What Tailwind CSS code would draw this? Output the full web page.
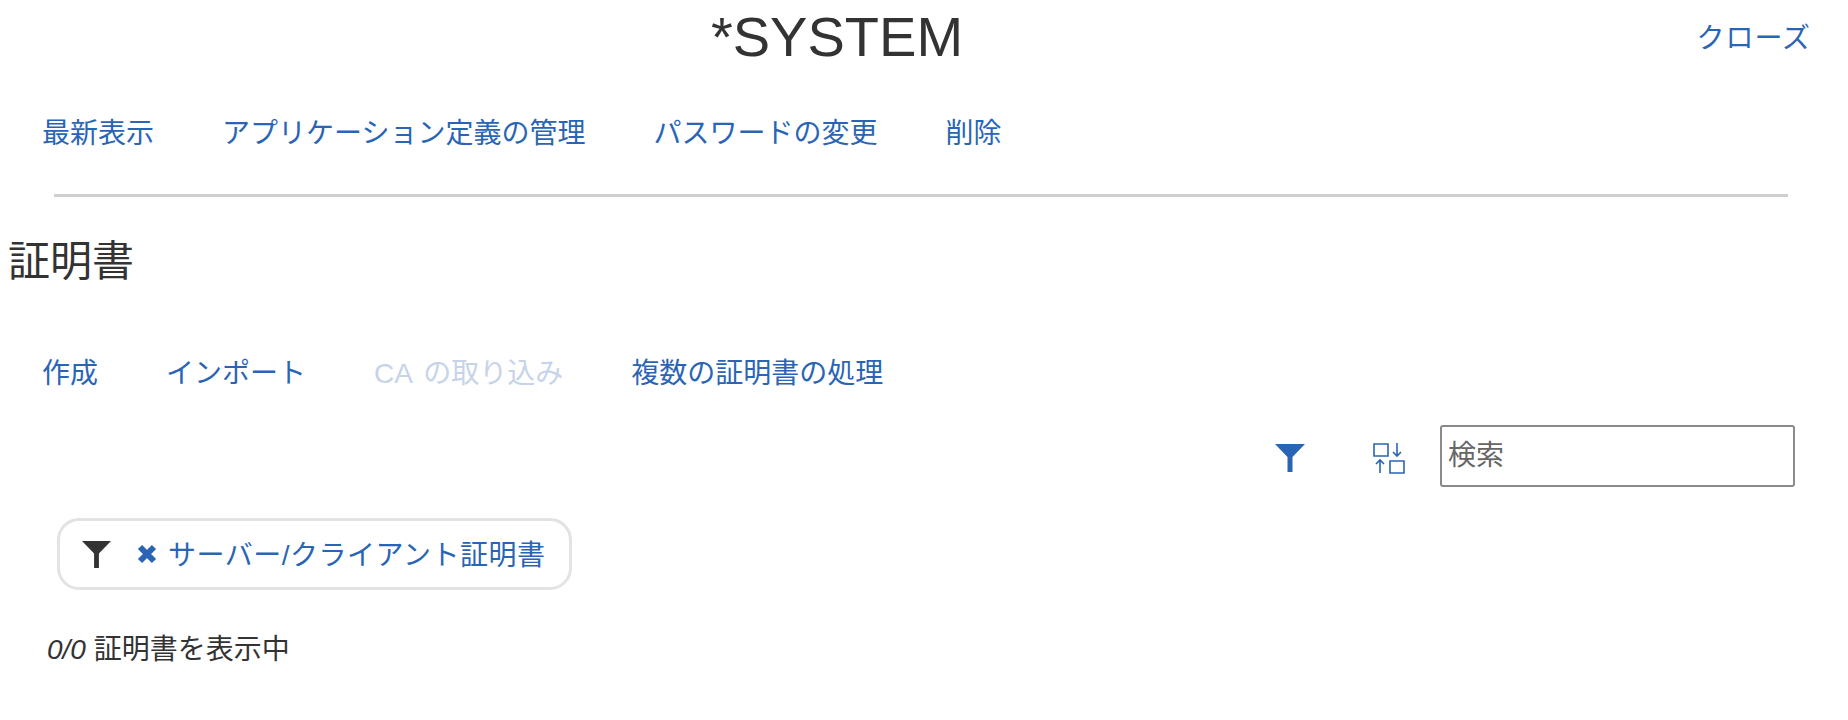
<!DOCTYPE html>
<html lang="ja">
<head>
    <meta charset="UTF-8">
    <title>*SYSTEM</title>
    <script src="https://cdn.jsdelivr.net/npm/@tailwindcss/browser@4"></script>
</head>
<body class="bg-white h-[720px] overflow-hidden text-[#333] font-['Liberation_Sans','Noto_Sans_CJK_JP',sans-serif]">
    <!-- Title -->
    <div class="relative h-[74px] flex justify-center pr-[174px]">
        <h1 class="text-[56px] leading-[74px]">*SYSTEM</h1>
        <a class="absolute right-[37px] top-[19px] text-[28px] leading-[40px] tracking-[1px] text-[#2a65b5]">クローズ</a>
    </div>

    <!-- Object actions -->
    <div class="mt-[40px] pl-[42px] flex gap-[68px] text-[28px] leading-[40px] text-[#2a65b5]">
        <a>最新表示</a>
        <a>アプリケーション定義の管理</a>
        <a>パスワードの変更</a>
        <a>削除</a>
    </div>

    <hr class="mt-[40px] mx-[54px] w-[1734px] border-0 h-[3px] bg-[#cfcfcf]">

    <h2 class="mt-[37px] pl-[8px] text-[42px] leading-[56px]">証明書</h2>

    <!-- List actions -->
    <div class="mt-[64px] pl-[42px] flex gap-[68px] text-[28px] leading-[40px] text-[#2a65b5]">
        <a>作成</a>
        <a>インポート</a>
        <a class="text-[#c6d4ea] [word-spacing:4px]">CA の取り込み</a>
        <a>複数の証明書の処理</a>
    </div>

    <!-- Toolbar -->
    <div class="mt-[31px] pr-[53px] flex justify-end items-center">
        <svg class="w-[30px] h-[30px] mr-[68px] mt-[3px]" viewBox="0 0 30 30" fill="#2a65b5"><path d="M0 1h30L17.500 14v15h-5V14z"/></svg>
        <svg class="w-[32px] h-[32px] mr-[35px] mt-[3px]" viewBox="0 0 32 32" fill="none" stroke="#2a65b5" stroke-width="1.6"><path d="M1 2h14v12H1zM17 19h14v12H17zM24 1v13M20 10l4 4 4-4M7 18v13M3 22l4-4 4 4"/></svg>
        <input type="text" placeholder="検索" class="w-[355px] h-[62px] px-[6px] border-2 border-[#8a8a8a] rounded-[3px] text-[28px] placeholder:text-[#666] outline-none">
    </div>

    <!-- Applied filter -->
    <div class="mt-[31px] ml-[57px] w-[515px] h-[72px] pl-[22px] flex items-center border-[3px] border-[#e3e3e3] rounded-[22px]">
        <svg class="w-[29px] h-[29px] mr-[26px]" viewBox="0 0 30 30" fill="#333"><path d="M0 1h30L17.500 14v15h-5V14z"/></svg>
        <svg class="w-[20px] h-[20px] mr-[11px]" viewBox="0 0 20 20" fill="none" stroke="#2a65b5" stroke-width="6"><path d="M3 3l14 14M17 3L3 17"/></svg>
        <span class="mt-[4px] text-[28px] leading-[40px] tracking-[0.5px] text-[#2a65b5] whitespace-nowrap">サーバー/クライアント証明書</span>
    </div>

    <p class="mt-[40px] pl-[47px] text-[28px] leading-[40px]"><em>0/0</em> 証明書を表示中</p>
</body>
</html>
